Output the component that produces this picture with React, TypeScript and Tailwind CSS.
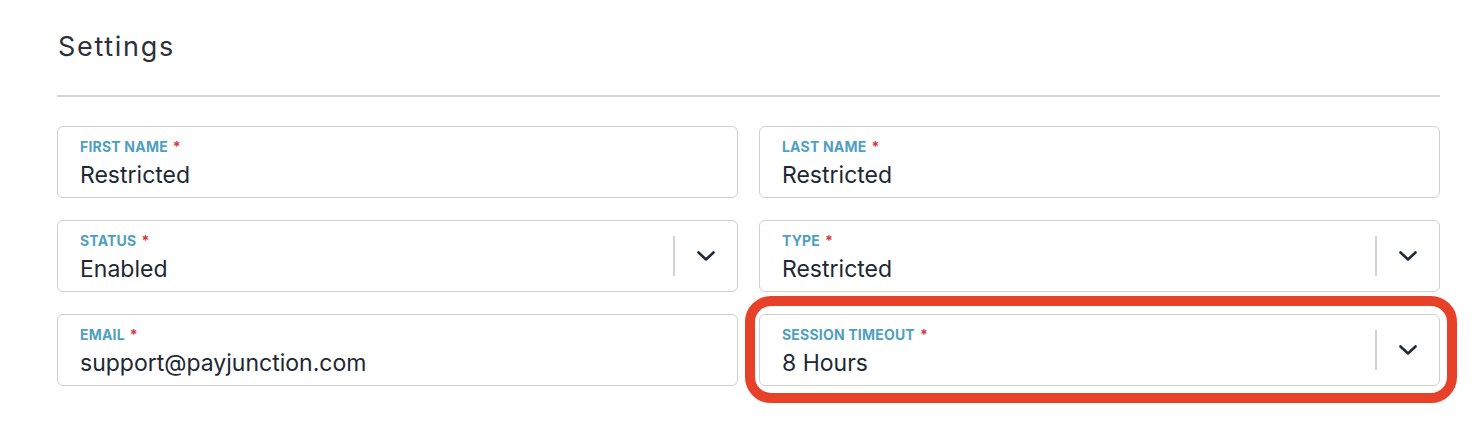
import { ReactNode } from "react";

interface FieldProps {
  label: string;
  value: string;
  select?: boolean;
  children?: ReactNode;
}

function Chevron() {
  return (
    <svg width="18" height="11" viewBox="0 0 18 11" fill="none" className="text-[#1f2b36]">
      <polyline
        points="1.5,1.5 9,8.5 16.5,1.5"
        stroke="currentColor"
        strokeWidth="2.6"
        strokeLinecap="round"
        strokeLinejoin="round"
      />
    </svg>
  );
}

function Field({ label, value, select = false, children }: FieldProps) {
  return (
    <div className="relative">
      {children}
      <div className="relative flex h-[72px] items-center rounded-md border border-[#d0d0d0] bg-white">
        <div className="flex-1 pl-[22px] pt-[12px] pb-[8px]">
          <div className="flex items-start text-[14px] font-bold leading-4 tracking-[0.2px] text-[#4f9fc0]">
            {label}
            <span className="ml-[5px] text-[#d4373d]">*</span>
          </div>
          <div className="mt-[6px] text-[23px] leading-7 text-[#1d2833]">{value}</div>
        </div>
        {select && (
          <div className="flex h-full items-center">
            <div className="h-10 w-[2px] bg-[#d2d2d2]" />
            <div className="flex w-[62px] items-center justify-center pt-[1px]">
              <Chevron />
            </div>
          </div>
        )}
      </div>
    </div>
  );
}

export default function App() {
  return (
    <div className="h-[422px] w-full bg-white font-['Inter','Liberation_Sans',sans-serif]">
      <div className="ml-[57px] w-[1383px] pt-[31px]">
        <h1 className="pl-[1px] text-[27px] font-normal leading-8 tracking-[1.7px] text-[#2a3139]">
          Settings
        </h1>
        <div className="mt-[32px] h-[2px] bg-[#d6d6d6]" />
        <div className="mt-[29px] grid grid-cols-2 gap-x-[21px] gap-y-[22px]">
          <Field label="FIRST NAME" value="Restricted" />
          <Field label="LAST NAME" value="Restricted" />
          <Field label="STATUS" value="Enabled" select />
          <Field label="TYPE" value="Restricted" select />
          <Field label="EMAIL" value="support@payjunction.com" />
          <Field label="SESSION TIMEOUT" value="8 Hours" select>
            <div className="pointer-events-none absolute -top-[18px] -left-[14px] -right-[17px] -bottom-[17px] rounded-[26px] border-[10px] border-[#e8412a]" />
          </Field>
        </div>
      </div>
    </div>
  );
}
